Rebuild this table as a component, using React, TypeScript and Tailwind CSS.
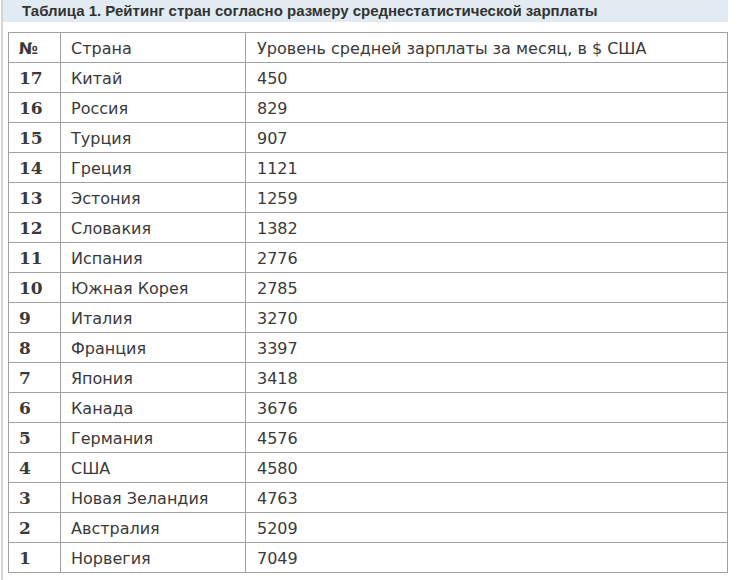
const rows: [string, string, string][] = [
  ['17', 'Китай', '450'],
  ['16', 'Россия', '829'],
  ['15', 'Турция', '907'],
  ['14', 'Греция', '1121'],
  ['13', 'Эстония', '1259'],
  ['12', 'Словакия', '1382'],
  ['11', 'Испания', '2776'],
  ['10', 'Южная Корея', '2785'],
  ['9', 'Италия', '3270'],
  ['8', 'Франция', '3397'],
  ['7', 'Япония', '3418'],
  ['6', 'Канада', '3676'],
  ['5', 'Германия', '4576'],
  ['4', 'США', '4580'],
  ['3', 'Новая Зеландия', '4763'],
  ['2', 'Австралия', '5209'],
  ['1', 'Норвегия', '7049'],
];

export default function App() {
  return (
    <div className="w-[737px] h-[580px] bg-white overflow-hidden">
      <div className="ml-px h-full border-l-2 border-[#d4d4d4]">
        {/* Caption */}
        <div className="h-[22px] w-[725px] bg-[#e1ebf1] pl-[19px] flex items-center text-[15px] font-bold text-[#333] font-['Liberation_Sans',Arial,sans-serif]">
          Таблица 1. Рейтинг стран согласно размеру среднестатистической зарплаты
        </div>

        {/* Table */}
        <table className="mt-[10px] ml-[5px] w-[720px] border-collapse text-[16px] text-[#3a3a3a] font-['DejaVu_Sans',sans-serif]">
          <colgroup>
            <col className="w-[52px]" />
            <col className="w-[185px]" />
            <col />
          </colgroup>
          <tbody>
            <tr className="h-[30px]">
              <td className="border border-[#a0a0a0] pl-[10px] pt-[2px] font-bold text-[16px] leading-none">№</td>
              <td className="border border-[#a0a0a0] pl-[10px] pt-[2px] leading-none">Страна</td>
              <td className="border border-[#a0a0a0] pl-[11px] pt-[2px] leading-none">Уровень средней зарплаты за месяц, в $ США</td>
            </tr>
            {rows.map(([n, c, v]) => (
              <tr key={n} className="h-[30px]">
                <td className="border border-[#a0a0a0] pl-[10px] pt-[2px] font-bold font-['DejaVu_Serif',serif] text-[17px] leading-none">{n}</td>
                <td className="border border-[#a0a0a0] pl-[10px] pt-[2px] leading-none">{c}</td>
                <td className="border border-[#a0a0a0] pl-[11px] pt-[2px] leading-none">{v}</td>
              </tr>
            ))}
          </tbody>
        </table>
      </div>
    </div>
  );
}
